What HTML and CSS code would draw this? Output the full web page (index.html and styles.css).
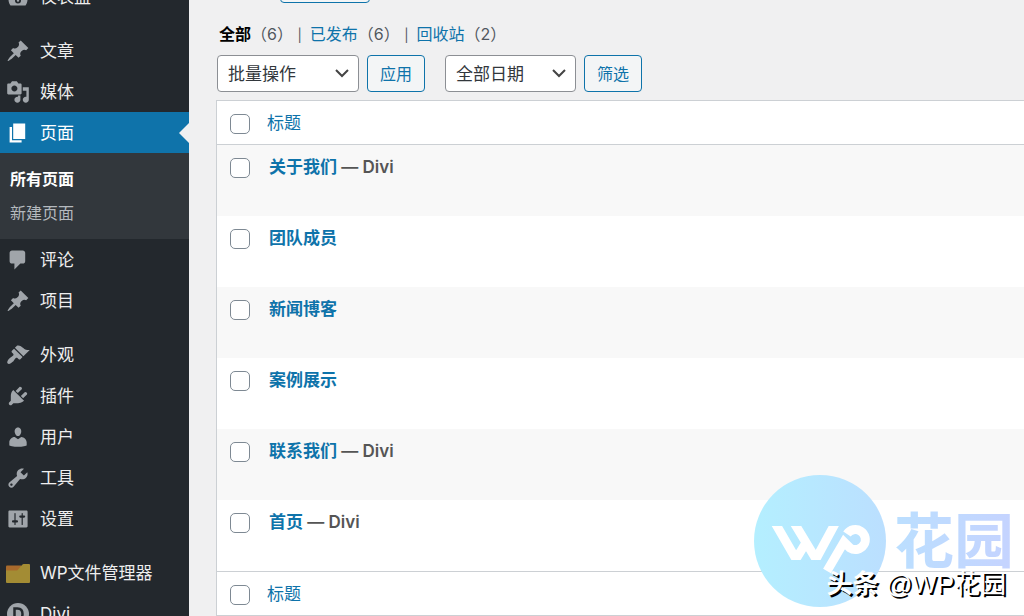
FILE: index.html
```html
<!DOCTYPE html>
<html lang="zh-CN">
<head>
    <meta charset="UTF-8">
    <meta name="viewport" content="width=device-width, initial-scale=1.0">
    <title>页面</title>
    <link rel="stylesheet" href="styles.css">
</head>
<body>
    <div class="admin">
        <!-- Sidebar menu -->
        <nav class="sidebar">
            <ul class="menu">
                <li><a href="#"><svg viewBox="0 0 20 20"><path fill-rule="evenodd" d="M3.76 17h12.48c1.34-1.63 1.76-3.73 1.76-6 0-4.42-3.58-8-8-8s-8 3.58-8 8c0 2.27.42 4.37 1.76 6zM10 10.500a2.500 2.500 0 1 1 0 5 2.500 2.500 0 0 1 0-5zM10 12a1 1 0 1 0 0 2 1 1 0 0 0 0-2z"/></svg>仪表盘</a></li>
                <li class="group"><a href="#"><svg viewBox="0 0 20 20"><path d="M10.44 3.02l1.82-1.82 6.36 6.35-1.83 1.82c-1.05-.68-2.48-.57-3.41.36l-.75.75c-.92.93-1.04 2.35-.35 3.41l-1.83 1.82-2.41-2.41-2.8 2.79c-.42.42-3.38 2.71-3.8 2.29s1.86-3.39 2.28-3.81l2.79-2.79L4.1 9.36l1.83-1.82c1.05.69 2.48.57 3.4-.36l.75-.75c.93-.92 1.05-2.35.36-3.41z"/></svg>文章</a></li>
                <li><a href="#"><svg viewBox="0 0 20 20"><path d="M13 11V4c0-.55-.45-1-1-1h-1.67L9 1H5L3.67 3H2c-.55 0-1 .45-1 1v7c0 .55.45 1 1 1h10c.55 0 1-.45 1-1zM7 4.500c1.38 0 2.500 1.12 2.500 2.500S8.38 9.500 7 9.500 4.500 8.38 4.500 7 5.62 4.500 7 4.500zM14 6h5v10.500c0 1.38-1.12 2.500-2.500 2.500S14 17.88 14 16.500s1.12-2.500 2.500-2.500c.17 0 .34.02.5.05V9h-3V6zm-4 8.05V13h2v3.500c0 1.38-1.12 2.500-2.500 2.500S7 17.88 7 16.500 8.12 14 9.500 14c.17 0 .34.02.5.05z"/></svg>媒体</a></li>
                <li class="current">
                    <a href="#"><svg viewBox="0 0 20 20"><path d="M6 15V2h10v13H6zm-1 1h8v2H3V5h2v11z"/></svg>页面</a>
                    <ul class="submenu">
                        <li><a class="active" href="#">所有页面</a></li>
                        <li><a href="#">新建页面</a></li>
                    </ul>
                </li>
                <li><a href="#"><svg viewBox="0 0 20 20"><path d="M5 2h9c1.1 0 2 .9 2 2v7c0 1.1-.9 2-2 2h-2l-5 5v-5H5c-1.100 0-2-.9-2-2V4c0-1.100.9-2 2-2z"/></svg>评论</a></li>
                <li><a href="#"><svg viewBox="0 0 20 20"><path d="M10.44 3.02l1.82-1.82 6.36 6.35-1.83 1.82c-1.05-.68-2.48-.57-3.41.36l-.75.75c-.92.93-1.04 2.35-.35 3.41l-1.83 1.82-2.41-2.41-2.8 2.79c-.42.42-3.38 2.71-3.8 2.29s1.86-3.39 2.28-3.81l2.79-2.79L4.1 9.36l1.83-1.82c1.05.69 2.48.57 3.4-.36l.75-.75c.93-.92 1.05-2.35.36-3.41z"/></svg>项目</a></li>
                <li class="group"><a href="#"><svg viewBox="0 0 20 20"><path d="M14.48 11.06L7.41 3.99l1.5-1.5c.5-.56 2.3-.47 3.51.32 1.21.8 1.43 1.28 2.91 2.1 1.18.64 2.45 1.26 4.45.85zm-.71.71L6.7 4.7 4.93 6.47c-.39.39-.39 1.02 0 1.41l1.06 1.06c.39.39.39 1.03 0 1.42-.6.6-1.43 1.11-2.21 1.69-.35.26-.7.53-1.01.84C1.43 14.23.4 16.08 1.4 17.07c.99 1 2.84-.03 4.18-1.36.31-.31.58-.66.85-1.02.57-.78 1.08-1.61 1.69-2.21.39-.39 1.02-.39 1.41 0l1.06 1.06c.39.39 1.02.39 1.41 0z"/></svg>外观</a></li>
                <li><a href="#"><svg viewBox="0 0 20 20"><path d="M13.11 4.36L9.87 7.6 8 5.73l3.24-3.24c.35-.34 1.05-.2 1.56.32.52.51.66 1.21.31 1.55zm-8 1.77l.91-1.12 9.01 9.01-1.19.84c-.71.71-2.63 1.16-3.82 1.16H6.14L4.9 17.26c-.59.59-1.54.59-2.12 0-.59-.58-.59-1.53 0-2.12l1.24-1.24v-3.88c0-1.13.4-3.19 1.09-3.89zm7.26 3.97l3.24-3.24c.34-.35 1.04-.21 1.55.31.52.51.66 1.21.31 1.55l-3.24 3.25z"/></svg>插件</a></li>
                <li><a href="#"><svg viewBox="0 0 20 20"><path d="M10 9.25c-2.27 0-2.73-3.44-2.73-3.44C7 4.02 7.82 2 9.97 2c2.16 0 2.98 2.02 2.71 3.81 0 0-.41 3.44-2.68 3.44zm0 2.57L12.72 10c2.39 0 4.52 2.33 4.52 4.53v2.49s-3.65 1.13-7.24 1.13c-3.65 0-7.24-1.13-7.24-1.13v-2.49c0-2.25 1.94-4.48 4.47-4.48z"/></svg>用户</a></li>
                <li><a href="#"><svg viewBox="0 0 20 20"><path d="M16.68 9.77c-1.34 1.34-3.3 1.67-4.95.99l-5.41 6.52c-.99.99-2.59.99-3.58 0s-.99-2.59 0-3.57l6.52-5.42c-.68-1.65-.35-3.61.99-4.95 1.28-1.28 3.12-1.62 4.72-1.06l-2.89 2.89 2.82 2.82 2.86-2.87c.53 1.58.18 3.39-1.08 4.65zM3.81 16.21c.4.39 1.04.39 1.43 0 .4-.4.4-1.04 0-1.43-.39-.4-1.03-.4-1.43 0-.39.39-.39 1.03 0 1.43z"/></svg>工具</a></li>
                <li><a href="#"><svg viewBox="0 0 20 20"><path d="M18 16V4c0-.55-.45-1-1-1H3c-.55 0-1 .45-1 1v12c0 .55.45 1 1 1h14c.55 0 1-.45 1-1zM8 11h1c.55 0 1 .45 1 1s-.45 1-1 1H8v1.5c0 .28-.22.5-.5.5s-.5-.22-.5-.5V13H6c-.55 0-1-.45-1-1s.45-1 1-1h1V5.5c0-.28.22-.5.5-.5s.5.22.5.5V11zm5-2h-1c-.55 0-1-.45-1-1s.45-1 1-1h1V5.5c0-.28.22-.5.5-.5s.5.22.5.5V7h1c.55 0 1 .45 1 1s-.45 1-1 1h-1v5.5c0 .28-.22.5-.5.5s-.5-.22-.5-.5V9z"/></svg>设置</a></li>
                <li class="group"><a href="#"><svg viewBox="0 0 24 24"><path fill="#a86a2c" d="M0 5.500q0-1 1-1h14v6H0z"/><path fill="#a38c34" d="M0 9.500h10.500q1 0 2-1.500l3-3.500q1-1.500 2-1.500H23q1 0 1 1v17q0 1-1 1H1q-1 0-1-1z"/></svg>WP文件管理器</a></li>
                <li><a href="#"><svg viewBox="0 0 24 24"><circle cx="12" cy="12" r="11"/><path fill="none" stroke="#23282d" stroke-width="2.500" d="M8.500 6.500v11h3q5 0 5-5.500t-5-5.500z"/></svg>Divi</a></li>
            </ul>
        </nav>

        <main class="content">
            <div class="search-row"><button type="button" class="button">搜索页面</button></div>

            <ul class="filters">
                <li><a class="active" href="#">全部</a>（6） <span class="bar">|</span></li>
                <li><a href="#">已发布</a>（6） <span class="bar">|</span></li>
                <li><a href="#">回收站</a>（2）</li>
            </ul>

            <div class="toolbar">
                <select class="bulk" aria-label="批量操作"><option>批量操作</option></select>
                <button type="button" class="button">应用</button>
                <select class="dates" aria-label="全部日期"><option>全部日期</option></select>
                <button type="button" class="button">筛选</button>
            </div>

            <!-- Pages list -->
            <table class="pages">
                <thead>
                    <tr>
                        <td class="check"><input type="checkbox" aria-label="全选"></td>
                        <th><a href="#">标题</a></th>
                    </tr>
                </thead>
                <tbody>
                    <tr>
                        <td class="check"><input type="checkbox" aria-label="关于我们"></td>
                        <td><a href="#">关于我们</a> — Divi</td>
                    </tr>
                    <tr>
                        <td class="check"><input type="checkbox" aria-label="团队成员"></td>
                        <td><a href="#">团队成员</a></td>
                    </tr>
                    <tr>
                        <td class="check"><input type="checkbox" aria-label="新闻博客"></td>
                        <td><a href="#">新闻博客</a></td>
                    </tr>
                    <tr>
                        <td class="check"><input type="checkbox" aria-label="案例展示"></td>
                        <td><a href="#">案例展示</a></td>
                    </tr>
                    <tr>
                        <td class="check"><input type="checkbox" aria-label="联系我们"></td>
                        <td><a href="#">联系我们</a> — Divi</td>
                    </tr>
                    <tr>
                        <td class="check"><input type="checkbox" aria-label="首页"></td>
                        <td><a href="#">首页</a> — Divi</td>
                    </tr>
                </tbody>
                <tfoot>
                    <tr>
                        <td class="check"><input type="checkbox" aria-label="全选"></td>
                        <th><a href="#">标题</a></th>
                    </tr>
                </tfoot>
            </table>
        </main>
    </div>

    <!-- Watermark over the page -->
    <div class="watermark">
        <svg class="mark" viewBox="0 0 132 132">
            <defs>
                <linearGradient id="sky">
                    <stop offset="0" stop-color="#b4efff"/>
                    <stop offset="1" stop-color="#bbdfff"/>
                </linearGradient>
                <clipPath id="band"><path d="M0 51h132v34H0z"/></clipPath>
            </defs>
            <circle cx="66" cy="66" r="66" fill="url(#sky)"/>
            <g fill="none" stroke="#fff" stroke-width="9">
                <path clip-path="url(#band)" d="M20 46L42 84L53 66M39 46L62 84L83 45"/>
                <path d="M73 96L90 67L96 73A10 10 0 1 0 93 59"/>
            </g>
        </svg>
        <span class="brand">花园</span>
    </div>
    <div class="credit"><b>头条</b> @WP花园</div>
</body>
</html>
```

FILE: styles.css
```css
* {
    box-sizing: border-box;
}

body {
    margin: 0;
    height: 100vh;
    overflow: hidden;
    position: relative;
    background: #f0f0f1;
    color: #50575e;
    font-family: Inter, "Noto Sans CJK SC", sans-serif;
    font-size: 16px;
    line-height: 24px;
}

a {
    color: #0e73aa;
    text-decoration: none;
}

ul {
    list-style: none;
    margin: 0;
    padding: 0;
}

.admin {
    display: flex;
    min-height: 100vh;
}

/* Sidebar */
.sidebar {
    flex: 0 0 189px;
    background: #23282d;
}

.menu {
    margin-top: -24px;
}

.menu > li > a {
    display: flex;
    align-items: center;
    gap: 10px;
    height: 41px;
    padding-left: 6px;
    color: #eee;
    font-size: 17px;
}

.menu svg {
    width: 24px;
    height: 24px;
    fill: #a0a5aa;
}

.menu .group {
    margin-top: 13px;
}

.menu > .current > a {
    position: relative;
    background: #0f73aa;
    color: #fff;
}

.menu .current svg {
    fill: #fff;
}

.current > a::after {
    content: "";
    position: absolute;
    right: 0;
    top: 11px;
    border: 10px solid transparent;
    border-left: 0;
    border-right-color: #f0f0f1;
}

.submenu {
    padding: 9px 0;
    background: #32373c;
}

.submenu a {
    display: block;
    padding-left: 10px;
    line-height: 34px;
    color: #b4b9be;
}

.submenu .active {
    color: #fff;
    font-weight: 700;
}

/* Content */
.content {
    flex: 1;
    padding-left: 27px;
}

.search-row {
    height: 3px;
    display: flex;
    align-items: flex-end;
    padding-left: 64px;
}

.filters {
    display: flex;
    gap: 8px;
    padding: 19px 0 9px 3px;
}

.filters .active {
    color: #000;
    font-weight: 700;
}

.filters .bar {
    font-size: 13px;
    line-height: 16px;
}

.toolbar {
    display: flex;
    gap: 8px;
    margin: 0 0 8px 1px;
}

.button {
    height: 37px;
    padding: 0 12px;
    border: 1px solid #0e73aa;
    border-radius: 4px;
    background: #f3f5f6;
    color: #0e73aa;
    font: inherit;
}

select {
    appearance: none;
    height: 37px;
    padding: 0 10px;
    border: 1px solid #8c8f94;
    border-radius: 4px;
    background: #fff url("data:image/svg+xml,%3Csvg xmlns='http://www.w3.org/2000/svg' viewBox='0 0 14 9'%3E%3Cpath d='M1 1l6 6 6-6' fill='none' stroke='%23444' stroke-width='2'/%3E%3C/svg%3E") no-repeat right 9px center / 14px 9px;
    color: #32373c;
    font: inherit;
    font-size: 17px;
}

.bulk {
    width: 142px;
}

.dates {
    width: 131px;
    margin-left: 12px;
}

/* Table */
.pages {
    width: 100%;
    border: 1px solid #ccd0d4;
    border-right: 0;
    border-spacing: 0;
    background: #fff;
    font-size: 17px;
}

.pages td,
.pages th {
    padding: 0;
    text-align: left;
}

.pages th {
    font-weight: 400;
    height: 44px;
}

.pages thead td,
.pages thead th {
    border-bottom: 1px solid #ccd0d4;
}

.pages tfoot td,
.pages tfoot th {
    border-top: 1px solid #ccd0d4;
}

.pages tbody td {
    height: 71px;
    padding: 10px 0 0 2px;
    vertical-align: top;
    color: #555;
    font-weight: 600;
}

.pages tbody tr:nth-child(odd) {
    background: #f8f8f8;
}

.pages .check {
    width: 50px;
    padding-left: 13px;
}

input[type="checkbox"] {
    appearance: none;
    display: block;
    width: 20px;
    height: 20px;
    margin: 3px 0 0;
    border: 1px solid #7e8993;
    border-radius: 5px;
    background: #fff;
}

/* Watermark */
.watermark {
    position: absolute;
    right: 10px;
    bottom: 9px;
    display: flex;
    align-items: center;
    gap: 8px;
}

.mark {
    width: 132px;
    height: 132px;
}

.brand {
    font-size: 60px;
    line-height: 64px;
    font-weight: 700;
    background: linear-gradient(to right, #bbdfff, #c5d3ff);
    -webkit-background-clip: text;
    background-clip: text;
    color: transparent;
}

.credit {
    position: absolute;
    right: 18px;
    bottom: 14px;
    color: #fff;
    font-family: "Liberation Sans", "Noto Sans CJK SC", sans-serif;
    font-size: 26px;
    line-height: 36px;
    text-shadow: 2px 2px 0 #000;
}
```
